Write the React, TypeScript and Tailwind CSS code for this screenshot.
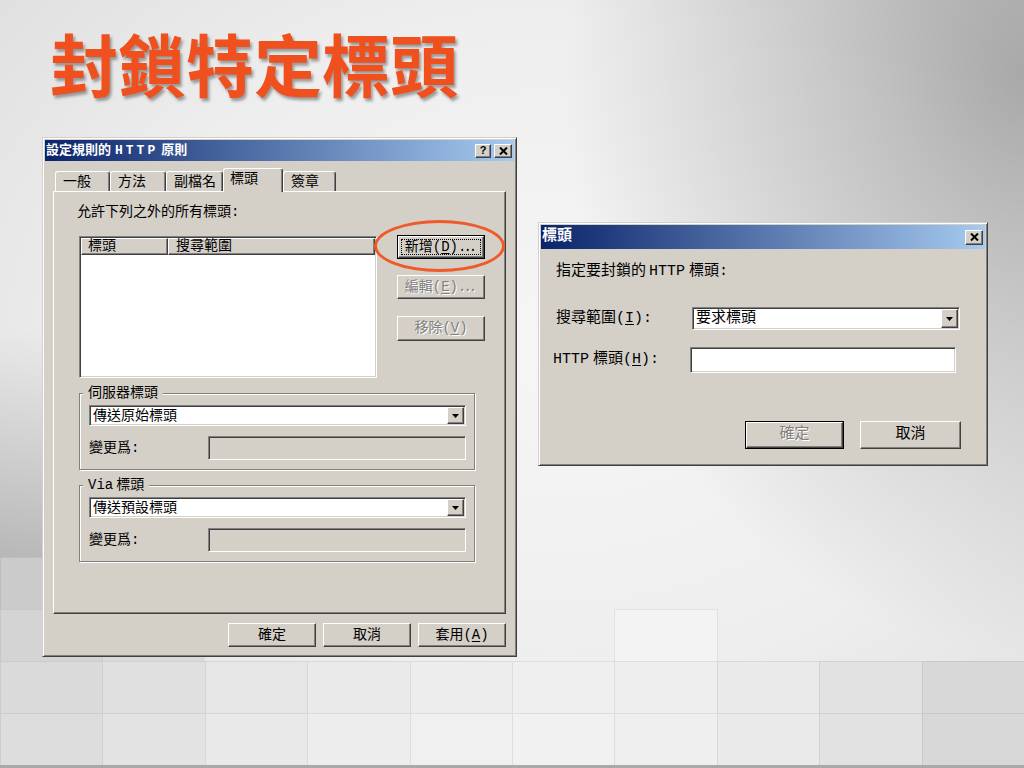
import React from "react";

const UI = "font-['Liberation_Mono','Noto_Sans_CJK_TC',monospace]";
const RAISED =
  "border border-t-white border-l-white border-r-[#404040] border-b-[#404040] shadow-[inset_-1px_-1px_0_#808080]";
const SUNKEN =
  "border border-t-[#808080] border-l-[#808080] border-r-white border-b-white shadow-[inset_1px_1px_0_#404040,inset_-1px_-1px_0_#d4d0c8]";
const FRAME =
  "border border-t-[#d4d0c8] border-l-[#d4d0c8] border-r-[#404040] border-b-[#404040] shadow-[inset_1px_1px_0_#fff,inset_-1px_-1px_0_#808080]";
const DIS = "text-[#808080] [text-shadow:1px_1px_0_#fff]";

function U({ children }: { children: React.ReactNode }) {
  return <span className="underline underline-offset-[2px]">{children}</span>;
}

function Dots() {
  return <span className="tracking-[-3px] pr-[3px]">...</span>;
}

function Btn({
  size,
  children,
  disabled,
  isDefault,
  focused,
}: {
  size: string;
  children: React.ReactNode;
  disabled?: boolean;
  isDefault?: boolean;
  focused?: boolean;
}) {
  const label = <span className={`whitespace-nowrap ${disabled ? DIS : "text-black"}`}>{children}</span>;
  const raised = (
    <div className={`${RAISED} bg-[#d4d0c8] w-full h-full flex items-center justify-center p-[2px]`}>
      {focused ? (
        <div className="w-full h-full border border-dotted border-black flex items-center justify-center">{label}</div>
      ) : (
        label
      )}
    </div>
  );
  if (isDefault) {
    return <div className={`${size} border border-black`}>{raised}</div>;
  }
  return <div className={size}>{raised}</div>;
}

function Tri() {
  return (
    <svg width="7" height="4" viewBox="0 0 7 4">
      <polygon points="0,0 7,0 3.5,4" fill="#000" />
    </svg>
  );
}

function Combo({ size, text }: { size: string; text: string }) {
  return (
    <div className={`${SUNKEN} ${size} bg-white p-px flex items-center`}>
      <span className="flex-1 pl-[2px] leading-[16px] whitespace-nowrap">{text}</span>
      <div className={`${RAISED} bg-[#d4d0c8] w-[17px] h-full flex items-center justify-center`}>
        <Tri />
      </div>
    </div>
  );
}

function CloseIcon() {
  return (
    <svg width="9" height="8" viewBox="0 0 9 8">
      <path d="M1 0.5 L8 7.5 M8 0.5 L1 7.5" stroke="#000" strokeWidth="2" />
    </svg>
  );
}

function Group({ legend, combo }: { legend: React.ReactNode; combo: string }) {
  return (
    <div className="relative mt-[15px] ml-[25px] w-[396px] h-[77px] border border-[#808080] shadow-[inset_1px_1px_0_#fff,1px_1px_0_#fff] pt-[11px] pl-[9px] pr-[8px]">
      <span className="absolute left-[3px] top-[-9px] bg-[#d4d0c8] px-[5px] leading-[16px] whitespace-nowrap">
        {legend}
      </span>
      <Combo size="w-[377px] h-[21px]" text={combo} />
      <div className="flex items-center mt-[10px] h-[24px]">
        <span className="leading-[16px]">變更爲:</span>
        <div className={`${SUNKEN} ml-auto w-[258px] h-full bg-[#d4d0c8]`} />
      </div>
    </div>
  );
}

const TABS = [
  { t: "一般", w: "w-[55px]" },
  { t: "方法", w: "w-[56px]" },
  { t: "副檔名", w: "w-[57px]" },
  { t: "標頭", w: "w-[60px]", active: true },
  { t: "簽章", w: "w-[53px]" },
];

function LeftDialog() {
  return (
    <div className={`relative ${FRAME} w-[475px] h-[520px] bg-[#d4d0c8] p-[2px] text-[14px] text-black ${UI}`}>
      <div className="h-[21px] bg-[linear-gradient(90deg,#0a246a,#a6caf0)] flex items-center justify-between pl-[1px] pr-[2px]">
        <span className="text-white font-bold text-[13px] leading-[16px] whitespace-nowrap">
          設定規則的<span className="ml-[4px] tracking-[3px]">HTTP</span>
          <span className="ml-[3px]">原則</span>
        </span>
        <div className="flex gap-[3px]">
          <div className={`${RAISED} bg-[#d4d0c8] w-[16px] h-[14px] flex items-center justify-center`}>
            <span className="font-['Liberation_Sans',sans-serif] font-bold text-[11px] leading-[11px]">?</span>
          </div>
          <div className={`${RAISED} bg-[#d4d0c8] w-[18px] h-[14px] flex items-center justify-center`}>
            <CloseIcon />
          </div>
        </div>
      </div>
      <div className="px-[8px] pt-[7px]">
        <div className="flex items-end h-[23px] pl-[2px]">
          {TABS.map((tab) =>
            tab.active ? (
              <div
                key={tab.t}
                className={`${tab.w} relative z-10 h-[24px] -mb-px bg-[#d4d0c8] border-t border-l border-r border-t-white border-l-white border-r-[#404040] shadow-[inset_-1px_0_0_#808080] rounded-t-[3px] pl-[6px] pt-[1px] leading-[18px] whitespace-nowrap`}
              >
                {tab.t}
              </div>
            ) : (
              <div
                key={tab.t}
                className={`${tab.w} h-[20px] border-t border-l border-r border-t-white border-l-white border-r-[#404040] shadow-[inset_-1px_0_0_#808080] rounded-t-[3px] pl-[7px] pt-[1px] leading-[18px] whitespace-nowrap`}
              >
                {tab.t}
              </div>
            )
          )}
        </div>
        <div className={`${RAISED} w-[453px] h-[423px] bg-[#d4d0c8]`}>
          <div className="pl-[23px] pt-[12px] leading-[16px]">允許下列之外的所有標頭:</div>
          <div className="flex mt-[16px] ml-[25px]">
            <div className={`${SUNKEN} bg-white p-px w-[298px] h-[142px]`}>
              <div className="flex h-[17px] leading-[15px]">
                <div className={`${RAISED} bg-[#d4d0c8] w-[87px] pl-[6px]`}>標頭</div>
                <div className={`${RAISED} bg-[#d4d0c8] flex-1 pl-[7px]`}>搜尋範圍</div>
              </div>
            </div>
            <div className="ml-[20px] -mt-px flex flex-col">
              <Btn size="w-[88px] h-[24px]" isDefault focused>
                新增(<U>D</U>)<Dots />
              </Btn>
              <div className="mt-[16px]">
                <Btn size="w-[88px] h-[24px]" disabled>
                  編輯(<U>E</U>)<Dots />
                </Btn>
              </div>
              <div className="mt-[17px]">
                <Btn size="w-[88px] h-[25px]" disabled>
                  移除(<U>V</U>)
                </Btn>
              </div>
            </div>
          </div>
          <Group legend="伺服器標頭" combo="傳送原始標頭" />
          <Group
            legend={
              <>
                Via<span className="ml-[3px]">標頭</span>
              </>
            }
            combo="傳送預設標頭"
          />
        </div>
        <div className="flex justify-end gap-[7px] mt-[9px]">
          <Btn size="w-[88px] h-[24px]">確定</Btn>
          <Btn size="w-[88px] h-[24px]">取消</Btn>
          <Btn size="w-[88px] h-[24px]">
            套用(<U>A</U>)
          </Btn>
        </div>
      </div>
      <div className="absolute left-[331px] top-[82px] w-[131px] h-[52px] rounded-[50%] border-[3px] border-[#ee5a2a]" />
    </div>
  );
}

function RightDialog() {
  return (
    <div className={`${FRAME} mt-[85px] w-[450px] h-[244px] bg-[#d4d0c8] p-[2px] text-[15px] text-black ${UI}`}>
      <div className="h-[24px] bg-[linear-gradient(90deg,#0a246a,#a6caf0)] flex items-center justify-between pl-[1px] pr-[2px]">
        <span className="text-white font-bold text-[15px] leading-[18px]">標頭</span>
        <div className={`${RAISED} bg-[#d4d0c8] w-[18px] h-[15px] flex items-center justify-center`}>
          <CloseIcon />
        </div>
      </div>
      <div className="pl-[15px] pr-[24px]">
        <div className="mt-[14px] leading-[18px] whitespace-nowrap">
          指定要封鎖的<span className="ml-[3px]">HTTP</span>
          <span className="ml-[4px]">標頭:</span>
        </div>
        <div className="flex items-center mt-[26px] h-[23px]">
          <span className="w-[136px] leading-[18px] whitespace-nowrap">
            搜尋範圍(<U>I</U>):
          </span>
          <Combo size="w-[268px] h-[23px]" text="要求標頭" />
        </div>
        <div className="flex items-center mt-[17px] h-[26px]">
          <span className="w-[137px] -ml-[3px] leading-[18px] whitespace-nowrap">
            HTTP<span className="ml-[4px]">標頭(<U>H</U>):</span>
          </span>
          <div className={`${SUNKEN} w-[266px] h-full bg-white`} />
        </div>
        <div className="flex justify-end gap-[16px] mt-[48px]">
          <Btn size="w-[99px] h-[28px]" isDefault disabled>
            確定
          </Btn>
          <Btn size="w-[101px] h-[28px]">取消</Btn>
        </div>
      </div>
    </div>
  );
}

const TILE_ROWS: string[][] = [
  ["bg-[#cbcbcb] border-t border-l border-[#bebebe]", "", "", "", "", "", "", "", "", ""],
  [
    "bg-[#d4d4d4] border-t border-l border-[#c6c6c6]",
    "bg-[#dadada] border-t border-l border-[#cccccc]",
    "",
    "",
    "",
    "",
    "bg-[#f3f3f3] border-t border-l border-[#e2e2e2]",
    "border-l border-[#e0e0e0]",
    "",
    "",
  ],
  [
    "bg-[#dadada] border-t border-l border-[#cbcbcb]",
    "bg-[#e0e0e0] border-t border-l border-[#d0d0d0]",
    "bg-[#e6e6e6] border-t border-l border-[#d5d5d5]",
    "bg-[#eaeaea] border-t border-l border-[#d9d9d9]",
    "bg-[#ededed] border-t border-l border-[#dcdcdc]",
    "bg-[#efefef] border-t border-l border-[#dedede]",
    "bg-[#eeeeee] border-t border-l border-[#dddddd]",
    "bg-[#eaeaea] border-t border-l border-[#d9d9d9]",
    "bg-[#e2e2e2] border-t border-l border-[#d1d1d1]",
    "bg-[#d8d8d8] border-t border-l border-[#c9c9c9]",
  ],
  [
    "bg-[#dddddd] border-t border-l border-[#cccccc]",
    "bg-[#e3e3e3] border-t border-l border-[#d1d1d1]",
    "bg-[#e9e9e9] border-t border-l border-[#d7d7d7]",
    "bg-[#ededed] border-t border-l border-[#dadada]",
    "bg-[#f0f0f0] border-t border-l border-[#dddddd]",
    "bg-[#f1f1f1] border-t border-l border-[#dedede]",
    "bg-[#efefef] border-t border-l border-[#dddddd]",
    "bg-[#eaeaea] border-t border-l border-[#d8d8d8]",
    "bg-[#e2e2e2] border-t border-l border-[#d1d1d1]",
    "bg-[#d8d8d8] border-t border-l border-[#c8c8c8]",
  ],
];

export default function App() {
  return (
    <div className="relative w-[1024px] h-[768px] overflow-hidden bg-[radial-gradient(ellipse_45%_75%_at_100%_10%,rgba(0,0,0,0.27)_0%,rgba(0,0,0,0)_100%),radial-gradient(ellipse_95%_95%_at_55%_45%,#f6f6f6_0%,#eeeeee_45%,#e0e0e0_75%,#d0d0d0_100%)]">
      <div className="absolute left-0 top-[330px] w-[70px] h-[228px] bg-[linear-gradient(180deg,rgba(0,0,0,0)_0%,rgba(0,0,0,0.2)_100%)]" />
      <div className="absolute left-0 right-0 top-[557px] h-[208px] grid grid-cols-10 grid-rows-4">
        {TILE_ROWS.flatMap((row, r) => row.map((c, i) => <div key={`${r}-${i}`} className={c} />))}
      </div>
      <div className="absolute left-0 right-0 top-[765px] h-[3px] bg-[#a9a9a9]" />
      <div className="relative z-10">
        <h1 className="pt-[29px] pl-[50px] text-[68px] leading-[68px] font-bold text-[#f0501e] font-['Noto_Sans_CJK_TC',sans-serif] [text-shadow:2px_3px_3px_rgba(0,0,0,0.35)]">
          封鎖特定標頭
        </h1>
        <div className="flex items-start mt-[40px] ml-[42px] gap-[21px]">
          <LeftDialog />
          <RightDialog />
        </div>
      </div>
    </div>
  );
}
